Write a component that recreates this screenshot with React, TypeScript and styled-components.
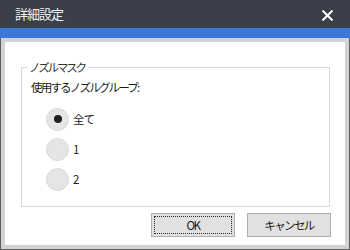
import styled, { createGlobalStyle } from "styled-components";

const GlobalStyle = createGlobalStyle`
    html, body {
        margin: 0;
        padding: 0;
        background: #ffffff;
    }
    body {
        font-family: "Noto Sans CJK JP", "Noto Sans", sans-serif;
    }
`;

const groups = [
    { label: "全て", checked: true },
    { label: "1", checked: false },
    { label: "2", checked: false },
];

const App = () => {
    return (
        <>
            <GlobalStyle />
            <Window>
                <TitleBar>
                    <Title>詳細設定</Title>
                    <CloseButton aria-label="close">
                        <svg width="11" height="11" viewBox="0 0 11 11">
                            <path d="M0.5 0.5 L10.5 10.5 M10.5 0.5 L0.5 10.5" stroke="#ffffff" strokeWidth="2" />
                        </svg>
                    </CloseButton>
                </TitleBar>
                <AccentStrip />
                <Frame>
                    <Panel>
                        <GroupBox>
                            <Legend>ノズルマスク</Legend>
                            <FieldLabel>使用するノズルグループ:</FieldLabel>
                            <RadioList>
                                {groups.map((g) => (
                                    <RadioRow key={g.label}>
                                        <RadioCircle $checked={g.checked} />
                                        <RadioText>{g.label}</RadioText>
                                    </RadioRow>
                                ))}
                            </RadioList>
                        </GroupBox>
                        <ButtonRow>
                            <DialogButton $focused>OK</DialogButton>
                            <DialogButton>キャンセル</DialogButton>
                        </ButtonRow>
                    </Panel>
                </Frame>
            </Window>
        </>
    );
};

export default App;

const Window = styled.div`
    width: 350px;
    height: 250px;
    display: flex;
    flex-direction: column;
    overflow: hidden;
`;

const TitleBar = styled.div`
    height: 28px;
    flex: none;
    background-color: #3b3f4a;
    display: flex;
    align-items: center;
    justify-content: space-between;
    padding: 0 17px 0 15px;
`;

const Title = styled.span`
    color: #f2f2f2;
    font-size: 13px;
    letter-spacing: -1px;
    line-height: 18px;
`;

const CloseButton = styled.div`
    width: 11px;
    height: 11px;
    display: flex;
    margin-top: 3px;
`;

const AccentStrip = styled.div`
    height: 10px;
    flex: none;
    background-color: #3a77d8;
`;

const Frame = styled.div`
    flex: 1;
    display: flex;
    background-color: #d3d3d3;
    padding: 4px;
    border: 1px solid #5e5e5e;
    border-top: none;
`;

const Panel = styled.div`
    flex: 1;
    background-color: #ffffff;
    display: flex;
    flex-direction: column;
    padding: 17px 14px 8px 16px;
`;

const GroupBox = styled.fieldset`
    flex: 1;
    min-height: 0;
    margin: 0 1px 0 0;
    padding: 0 0 0 9px;
    border: 1px solid #d8d8d8;
`;

const Legend = styled.legend`
    margin-left: -3px;
    padding: 0 3px 0 1px;
    font-size: 11.5px;
    letter-spacing: -2.2px;
    line-height: 16px;
    color: #333333;
`;

const FieldLabel = styled.div`
    margin-top: 4px;
    font-size: 11.5px;
    letter-spacing: -1.8px;
    line-height: 16px;
    color: #1a1a1a;
`;

const RadioList = styled.div`
    display: flex;
    flex-direction: column;
    margin-top: 9px;
    padding-left: 15px;
`;

const RadioRow = styled.div`
    height: 30px;
    display: flex;
    align-items: center;
    gap: 4px;
`;

const RadioCircle = styled.span<{ $checked?: boolean }>`
    width: 23px;
    height: 23px;
    box-sizing: border-box;
    border-radius: 50%;
    background-color: #e5e5e5;
    border: 1px solid #d9d9d9;
    display: flex;
    align-items: center;
    justify-content: center;
    &::after {
        content: "";
        display: ${({ $checked }) => ($checked ? "block" : "none")};
        width: 8px;
        height: 8px;
        border-radius: 50%;
        background-color: #1f1f1f;
    }
`;

const RadioText = styled.span`
    font-size: 11.5px;
    letter-spacing: -1px;
    line-height: 16px;
    color: #1a1a1a;
`;

const ButtonRow = styled.div`
    display: flex;
    justify-content: flex-end;
    gap: 12px;
    margin-top: 6px;
`;

const DialogButton = styled.div<{ $focused?: boolean }>`
    position: relative;
    width: 84px;
    height: 24px;
    box-sizing: border-box;
    background-color: #e1e1e1;
    border: 1px solid #adadad;
    display: flex;
    align-items: center;
    justify-content: center;
    font-size: 11.5px;
    letter-spacing: -1.6px;
    color: #1a1a1a;
    &::after {
        content: "";
        display: ${({ $focused }) => ($focused ? "block" : "none")};
        position: absolute;
        inset: 2px;
        border: 1px dotted #2b2b2b;
    }
`;
